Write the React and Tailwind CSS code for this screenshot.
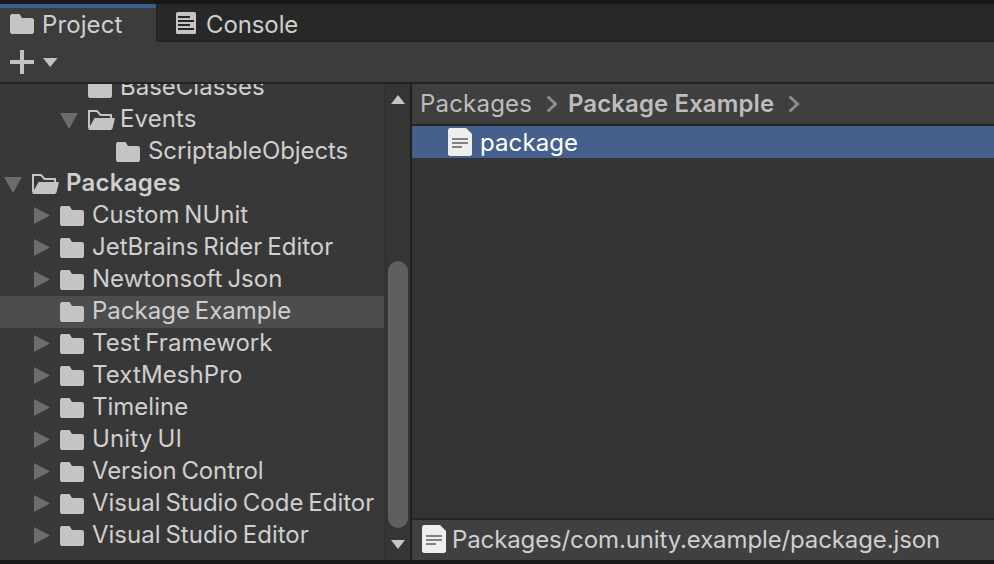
const tree = [
  { label: 'BaseClasses', pad: 'pl-[60px]', icon: 'closed', arrow: null },
  { label: 'Events', pad: 'pl-[60px]', icon: 'open', arrow: 'down', track: 'tracking-[0.1px]' },
  { label: 'ScriptableObjects', pad: 'pl-[88px]', icon: 'closed', arrow: null, track: 'tracking-[-0.1px]' },
  { label: 'Packages', pad: 'pl-1', icon: 'open', arrow: 'down', bold: true, track: 'tracking-[0.25px]' },
  { label: 'Custom NUnit', pad: 'pl-8', icon: 'closed', arrow: 'right' },
  { label: 'JetBrains Rider Editor', pad: 'pl-8', icon: 'closed', arrow: 'right' },
  { label: 'Newtonsoft Json', pad: 'pl-8', icon: 'closed', arrow: 'right' },
  { label: 'Package Example', pad: 'pl-8', icon: 'closed', arrow: null, selected: true },
  { label: 'Test Framework', pad: 'pl-8', icon: 'closed', arrow: 'right', track: 'tracking-[0.05px]' },
  { label: 'TextMeshPro', pad: 'pl-8', icon: 'closed', arrow: 'right', track: 'tracking-[0.1px]' },
  { label: 'Timeline', pad: 'pl-8', icon: 'closed', arrow: 'right' },
  { label: 'Unity UI', pad: 'pl-8', icon: 'closed', arrow: 'right', track: 'tracking-[0.15px]' },
  { label: 'Version Control', pad: 'pl-8', icon: 'closed', arrow: 'right', track: 'tracking-[-0.12px]' },
  { label: 'Visual Studio Code Editor', pad: 'pl-8', icon: 'closed', arrow: 'right' },
  { label: 'Visual Studio Editor', pad: 'pl-8', icon: 'closed', arrow: 'right' },
];

function Folder() {
  return (
    <svg className="h-5 w-6 shrink-0" viewBox="0 0 24 20" fill="#c4c4c4">
      <path d="M1.5 0H9.5L12 4H22.5L24 5.5V18.5L22.5 20H1.5L0 18.5V1.5Z" />
    </svg>
  );
}

function OpenFolder() {
  return (
    <svg className="h-5 w-7 shrink-0" viewBox="0 0 28 20">
      <path d="M1 18.5V1H9L12.5 5H23V8" fill="none" stroke="#c4c4c4" strokeWidth="2" />
      <path d="M6.5 8H27L24.5 18.5L23 20H1L0.5 19Z" fill="#c4c4c4" />
    </svg>
  );
}

function Arrow({ kind }) {
  return (
    <svg className="h-5 w-7 shrink-0" viewBox="0 0 28 20" fill="#6c6c6c">
      {kind === 'down' && <path d="M0 3H18L9 19Z" />}
      {kind === 'right' && <path d="M2 1L18 9.5L2 18Z" />}
    </svg>
  );
}

function FileIcon() {
  return (
    <svg className="h-7 w-6 shrink-0" viewBox="0 0 24 28">
      <path d="M1.5 0H18L24 6V26.5L22.5 28H1.5L0 26.5V1.5Z" fill="#eeeeee" />
      <path d="M4 11H20M4 15H20M4 19H14" stroke="#7f837f" strokeWidth="2" />
    </svg>
  );
}

function ConsoleIcon() {
  return (
    <svg className="h-[22px] w-5 shrink-0" viewBox="0 0 20 22">
      <rect width="20" height="22" rx="1.5" fill="#c4c4c4" />
      <path d="M2 5H14M2 9H18M2 13H14M2 17H18" stroke="#282828" strokeWidth="2" />
    </svg>
  );
}

function Chevron() {
  return (
    <svg className="h-[18px] w-3 shrink-0" viewBox="0 0 12 18" fill="none" stroke="#8c8c8c" strokeWidth="3">
      <path d="M1.5 1.5L9.5 9L1.5 16.5" />
    </svg>
  );
}

function TreeRow({ label, pad, icon, arrow, bold, selected, track = '' }) {
  return (
    <div className={`flex h-8 shrink-0 ${pad} ${selected ? 'bg-[#4d4d4d]' : ''}`}>
      <div className="flex pt-1.5">
        <Arrow kind={arrow} />
        {icon === 'open' ? <OpenFolder /> : <Folder />}
      </div>
      <span
        className={`${icon === 'closed' ? 'ml-2' : bold ? 'ml-1.5' : 'ml-1'} leading-[30px] whitespace-nowrap [word-spacing:-1.8px] ${track} ${bold ? 'font-semibold' : ''}`}
      >
        {label}
      </span>
    </div>
  );
}

export default function App() {
  return (
    <div className="flex h-[564px] w-[994px] flex-col overflow-hidden border-y-4 border-[#191919] bg-[#383838] font-['Inter',sans-serif] text-[24px] text-[#cfcfcf]">
      <div className="flex h-[38px] shrink-0 bg-[#282828]">
        <div className="flex w-[156px] rounded-tr-[2px] border-t-4 border-[#3a6090] bg-[#3c3c3c] pl-2.5">
          <div className="pt-1.5"><Folder /></div>
          <span className="ml-2 leading-[33px] tracking-[0.1px]">Project</span>
        </div>
        <div className="flex flex-1 border-b-2 border-l-2 border-[#232323] pl-[18px]">
          <div className="pt-2"><ConsoleIcon /></div>
          <span className="ml-2.5 leading-[41px] tracking-[-0.1px]">Console</span>
        </div>
      </div>
      <div className="flex h-[42px] shrink-0 border-b-2 border-[#232323] bg-[#3c3c3c] pt-2 pl-2.5">
        <svg className="h-6 w-6" viewBox="0 0 24 24" stroke="#c4c4c4" strokeWidth="4">
          <path d="M12 0V24M0 12H24" />
        </svg>
        <svg className="mt-2 ml-2 h-[9px] w-4" viewBox="0 0 16 9" fill="#c4c4c4">
          <path d="M1 0H15.5L8.2 9Z" />
        </svg>
      </div>
      <div className="flex min-h-0 flex-1">
        <div className="w-[384px] shrink-0 overflow-hidden">
          <div className="-mt-3 flex flex-col">
            {tree.map((item) => (
              <TreeRow key={item.label} {...item} />
            ))}
          </div>
        </div>
        <div className="flex w-7 shrink-0 flex-col items-center border-r-2 border-l-2 border-r-[#202020] border-l-[#323232] bg-[#353535]">
          <svg className="mt-[11px] h-[9px] w-[14px]" viewBox="0 0 14 9" fill="#c4c4c4">
            <path d="M0 9L7 0L14 9Z" />
          </svg>
          <div className="mt-[157px] h-[267px] w-5 rounded-full bg-[#5f5f5f]" />
          <svg className="mt-3 h-[9px] w-[14px]" viewBox="0 0 14 9" fill="#c4c4c4">
            <path d="M0 0H14L7 9Z" />
          </svg>
        </div>
        <div className="flex min-w-0 flex-1 flex-col bg-[#333333]">
          <div className="flex h-[42px] shrink-0 border-b-2 border-[#232323] bg-[#3f3f3f] pl-2 leading-[40px] text-[#bdbdbd]">
            <span className="w-[126px] tracking-[0.2px]">Packages</span>
            <div className="w-[22px] pt-[11px]"><Chevron /></div>
            <span className="w-[220px] font-semibold tracking-[0.1px]">Package Example</span>
            <div className="pt-[11px]"><Chevron /></div>
          </div>
          <div className="flex h-8 shrink-0 bg-[#45608c] pt-0.5 pl-9 text-white">
            <FileIcon />
            <span className="ml-2 leading-[30px] tracking-[0.1px]">package</span>
          </div>
          <div className="flex-1" />
          <div className="flex h-[42px] shrink-0 border-t-2 border-[#262626] bg-[#404040] pt-[5px] pl-2.5">
            <FileIcon />
            <span className="ml-1.5 leading-[30px] tracking-[-0.12px]">Packages/com.unity.example/package.json</span>
          </div>
        </div>
      </div>
    </div>
  );
}
